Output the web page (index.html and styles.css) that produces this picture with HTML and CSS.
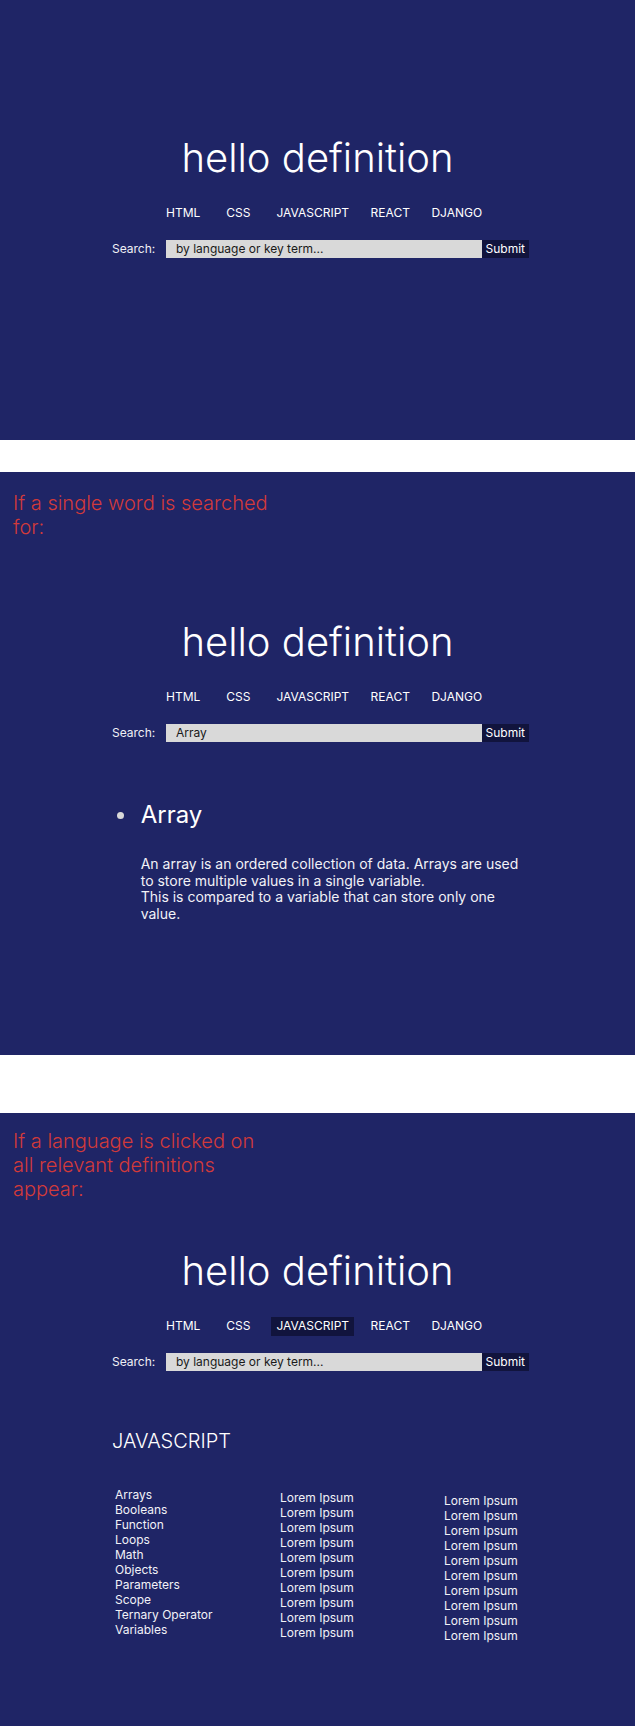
FILE: index.html
```html
<!DOCTYPE html>
<html lang="en">
<head>
<meta charset="utf-8">
<title>hello definition</title>
<link rel="stylesheet" href="styles.css">
</head>
<body>
<section class="screen screen--intro">
  <h1 class="title">hello definition</h1>
  <div class="panel">
    <nav class="nav">
      <a class="nav-item">HTML</a>
      <a class="nav-item">CSS</a>
      <a class="nav-item">JAVASCRIPT</a>
      <a class="nav-item">REACT</a>
      <a class="nav-item">DJANGO</a>
    </nav>
    <form class="search">
      <label class="search-label">Search:</label>
      <input class="search-input" type="text" placeholder="by language or key term...">
      <button class="search-btn" type="button">Submit</button>
    </form>
  </div>
</section>

<section class="screen screen--word">
  <p class="note">If a single word is searched for:</p>
  <h1 class="title">hello definition</h1>
  <div class="panel">
    <nav class="nav">
      <a class="nav-item">HTML</a>
      <a class="nav-item">CSS</a>
      <a class="nav-item">JAVASCRIPT</a>
      <a class="nav-item">REACT</a>
      <a class="nav-item">DJANGO</a>
    </nav>
    <form class="search">
      <label class="search-label">Search:</label>
      <input class="search-input" type="text" value="Array">
      <button class="search-btn" type="button">Submit</button>
    </form>
    <ul class="defs">
      <li class="def">
        <h2 class="def-term">Array</h2>
        <p class="def-text">An array is an ordered collection of data. Arrays are used to store multiple values in a single variable.<br>This is compared to a variable that can store only one value.</p>
      </li>
    </ul>
  </div>
</section>

<section class="screen screen--lang">
  <p class="note">If a language is clicked on all relevant definitions appear:</p>
  <h1 class="title">hello definition</h1>
  <div class="panel">
    <nav class="nav">
      <a class="nav-item">HTML</a>
      <a class="nav-item">CSS</a>
      <a class="nav-item nav-item--active">JAVASCRIPT</a>
      <a class="nav-item">REACT</a>
      <a class="nav-item">DJANGO</a>
    </nav>
    <form class="search">
      <label class="search-label">Search:</label>
      <input class="search-input" type="text" placeholder="by language or key term...">
      <button class="search-btn" type="button">Submit</button>
    </form>
    <h2 class="lang-title">JAVASCRIPT</h2>
    <div class="terms">
      <ul class="term-col term-col--1">
        <li>Arrays</li><li>Booleans</li><li>Function</li><li>Loops</li><li>Math</li>
        <li>Objects</li><li>Parameters</li><li>Scope</li><li>Ternary Operator</li><li>Variables</li>
      </ul>
      <ul class="term-col term-col--2">
        <li>Lorem Ipsum</li><li>Lorem Ipsum</li><li>Lorem Ipsum</li><li>Lorem Ipsum</li><li>Lorem Ipsum</li>
        <li>Lorem Ipsum</li><li>Lorem Ipsum</li><li>Lorem Ipsum</li><li>Lorem Ipsum</li><li>Lorem Ipsum</li>
      </ul>
      <ul class="term-col term-col--3">
        <li>Lorem Ipsum</li><li>Lorem Ipsum</li><li>Lorem Ipsum</li><li>Lorem Ipsum</li><li>Lorem Ipsum</li>
        <li>Lorem Ipsum</li><li>Lorem Ipsum</li><li>Lorem Ipsum</li><li>Lorem Ipsum</li><li>Lorem Ipsum</li>
      </ul>
    </div>
  </div>
</section>
</body>
</html>
```

FILE: styles.css
```css
* { box-sizing: border-box; }

html, body {
  margin: 0;
  padding: 0;
  background: #ffffff;
}

body {
  font-family: Inter, "Noto Sans", "Liberation Sans", sans-serif;
  color: #ffffff;
}

.screen {
  background: #1f2566;
  overflow: hidden;
}

.screen--intro {
  height: 440px;
  padding-top: 134px;
}

.screen--word {
  height: 583px;
  margin-top: 32px;
  padding-top: 19px;
}

.screen--lang {
  height: 613px;
  margin-top: 58px;
  padding-top: 16px;
}

.note {
  margin: 0 0 0 13px;
  width: 260px;
  font-size: 20px;
  line-height: 24px;
  font-weight: 300;
  color: #d23a3a;
}

.title {
  margin: 0;
  text-align: center;
  font-size: 40px;
  line-height: 48px;
  font-weight: 300;
  color: #ffffff;
}

.screen--word .title { margin-top: 79px; }
.screen--lang .title { margin-top: 46px; }

.panel {
  width: 417px;
  margin-left: 112px;
}

.nav {
  display: flex;
  gap: 11.5px;
  padding-left: 49px;
  margin-top: 21.5px;
}

.nav-item {
  display: block;
  font-size: 12px;
  line-height: 16px;
  padding: 1.5px 5px;
  color: #ffffff;
}

.nav-item:nth-child(-n+2) {
  margin-right: 4.5px;
}

.nav-item--active {
  background: #11143d;
}

.search {
  display: flex;
  align-items: stretch;
  height: 18.5px;
  margin: 17px 0 0;
}

.search-label {
  width: 54px;
  display: flex;
  align-items: center;
  font-size: 12px;
  color: #f0f0f5;
}

.search-input {
  width: 316px;
  height: 100%;
  border: none;
  outline: none;
  margin: 0;
  padding: 0 0 0 10px;
  background: #d9d9d9;
  font-family: inherit;
  font-size: 12px;
  color: #1a1a1a;
  border-radius: 0;
}

.search-input::placeholder {
  color: #1a1a1a;
  opacity: 1;
}

.search-btn {
  height: 100%;
  border: none;
  margin: 0;
  padding: 0 4px;
  background: #11143d;
  color: #ffffff;
  font-family: inherit;
  font-size: 12px;
  line-height: 18.5px;
  border-radius: 0;
}

.defs {
  list-style: none;
  margin: 58.3px 0 0;
  padding: 0;
}

.def {
  position: relative;
  padding-left: 28.7px;
}

.def::before {
  content: "";
  position: absolute;
  left: 5.2px;
  top: 11.8px;
  width: 7px;
  height: 7px;
  border-radius: 50%;
  background: #d9d9d9;
}

.def-term {
  margin: 0;
  font-size: 24px;
  line-height: 29px;
  font-weight: 400;
}

.def-text {
  margin: 27px 0 0;
  width: 388px;
  font-size: 14px;
  line-height: 16.5px;
  color: #f2f2f7;
}

.lang-title {
  margin: 58.3px 0 0;
  font-size: 20px;
  line-height: 25px;
  font-weight: 300;
}

.terms {
  display: grid;
  grid-template-columns: 165px 164px 1fr;
  padding-left: 3px;
  margin-top: 32.4px;
  align-items: start;
}

.term-col {
  list-style: none;
  margin: 0;
  padding: 0;
  font-size: 12px;
  line-height: 15px;
  color: #f2f2f7;
}

.term-col--2 { margin-top: 3px; }
.term-col--3 { margin-top: 6px; }
```
